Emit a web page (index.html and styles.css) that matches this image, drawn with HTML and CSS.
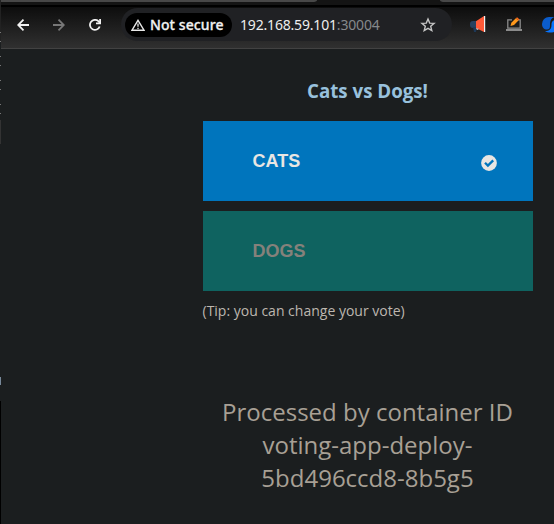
FILE: index.html
```html
<!DOCTYPE html>
<html lang="en">
<head>
<meta charset="utf-8">
<title>Cats vs Dogs!</title>
<link rel="stylesheet" href="styles.css">
</head>
<body>
<div class="desktop">
  <div class="edge"></div>
  <div class="browser">
    <div class="tabs"><div class="tab-left"></div><div class="tab-right"></div></div>
    <header class="toolbar">
      <nav class="nav">
        <svg width="12" height="12" viewBox="0 0 12 12" fill="none" stroke="#f2f2f2" stroke-width="1.8"><path d="M12 6H1.5M6.5 .7 1.2 6l5.3 5.3"/></svg>
        <svg width="12" height="12" viewBox="0 0 12 12" fill="none" stroke="#777" stroke-width="1.8"><path d="M0 6h10.5M5.5 .7 10.8 6l-5.3 5.3"/></svg>
        <svg width="12" height="12" viewBox="0 0 12 12" fill="none" stroke="#f2f2f2" stroke-width="1.8"><path d="M10.7 7.5A5 5 0 1 1 9.7 2.5L11 4"/><path d="M11.1 0v4.3H7"/></svg>
      </nav>
      <div class="address">
        <div class="chip">
          <svg width="14" height="12" viewBox="0 0 14 12"><path d="M7 1.3 13 11.2H1z" fill="none" stroke="#e8e8e8" stroke-width="1.4"/><path d="M7 4.5v3.3M7 8.7v1.2" stroke="#e8e8e8" stroke-width="1.3"/></svg>
          <span class="chip-text">Not secure</span>
        </div>
        <div class="url">192.168.59.101<span class="port">:30004</span></div>
        <svg class="star" width="16" height="16" viewBox="0 0 16 16"><path d="M8 2 9.7 6.1l4.4.3-3.4 2.9 1.1 4.3L8 11.3l-3.8 2.3 1.1-4.3-3.4-2.9 4.4-.3z" fill="none" stroke="#c6c6c6" stroke-width="1.4"/></svg>
      </div>
      <svg class="megaphone" width="16" height="17" viewBox="0 0 16 17"><path d="M3 5h4v7H3a3 3 0 0 1-3-3V8a3 3 0 0 1 3-3z" fill="#26415f"/><path d="M3 11h4l-1 5H4z" fill="#1d3857"/><path d="M6 5.2 14 0v16l-8-4z" fill="#ff5a38"/><path d="M14 0h1.2v16H14z" fill="#eef3f5"/><path d="m6 12 3 1-2 1z" fill="#ddd"/></svg>
      <svg class="laptop" width="16" height="15" viewBox="0 0 16 15"><path d="M6 2.8H1.8v8.4h12.4V2.8H12" fill="none" stroke="#8b8b8b" stroke-width="1.3"/><path d="M0 12h16v2H0z" fill="#8b8b8b"/><path d="m4.5 9 .8-3.2L9.8 1.2l2.6 2.4L8 8z" fill="#ff981c"/><path d="m9.8 1.2 1.3-1 2.4 2.2-1.1 1.2z" fill="#ff6b1a"/></svg>
      <svg class="swirl" width="16" height="16" viewBox="0 0 16 16"><path d="M13 0H7A7 7 0 0 0 0 7c0 3.500 2 5.500 5 5.500 2.500 0 3-1.500 3-4C8 4 9 1 13 0z" fill="#0b5ccb"/><path d="M16 3h-2c-4 0-4.500 2.500-4.500 5 0 4-2 6-6.500 6 4 3 13 2 13-5z" fill="#0875ff"/></svg>
    </header>
    <main class="page">
      <section class="vote">
        <h1>Cats vs Dogs!</h1>
        <button class="choice cats">CATS
          <svg width="16" height="16" viewBox="0 0 16 16"><circle cx="8" cy="8" r="7.9" fill="#e8e6e3"/><path d="m4 7.7 2.9 2.9L12.2 5.4" fill="none" stroke="#0075bd" stroke-width="2.3"/></svg>
        </button>
        <button class="choice dogs">DOGS</button>
        <p class="tip">(Tip: you can change your vote)</p>
        <p class="host">Processed by container ID voting-app-deploy-5bd496ccd8-8b5g5</p>
      </section>
    </main>
  </div>
</div>
</body>
</html>
```
FILE: styles.css
```css
* { box-sizing: border-box; }
body { margin: 0; background: #1b1e1f; font-family: "Open Sans", sans-serif; overflow: hidden; }
svg { display: block; flex: none; }
.desktop { display: flex; height: 524px; }
.edge {
  width: 1px;
  background: linear-gradient(#222 0 32px, #777 32px 33px, #222 33px 41px, #777 41px 42px, #1b1e1f 42px 56px, #777 56px 57px, #1b1e1f 57px 65px, #777 65px 66px, #1b1e1f 66px 80px, #777 80px 81px, #1b1e1f 81px 89px, #777 89px 90px, #1b1e1f 90px 104px, #777 104px 105px, #1b1e1f 105px 113px, #777 113px 114px, #1b1e1f 114px 120px, #333 120px 144px, #1b1e1f 144px 377px, #789 377px 385px, #1b1e1f 385px 401px, #000 401px);
}
.browser { flex: 1; min-width: 0; }
.tabs { height: 7px; display: flex; justify-content: space-between; background: #141414; border-bottom: 2px solid #000; padding-bottom: 3px; }
.tab-left { width: 316px; height: 2px; background: #484848; border-bottom-right-radius: 5px 2px; }
.tab-right { width: 114px; height: 2px; background: #484848; border-bottom-left-radius: 5px 2px; }
.toolbar { height: 42px; display: flex; align-items: center; background: linear-gradient(#0d0d0d, #303030); border-bottom: 1px solid #424242; overflow: hidden; padding-bottom: 6px; }
.nav { display: flex; gap: 24px; width: 120px; padding: 0 0 0 16px; flex: none; }
.address { display: flex; align-items: center; flex: none; width: 331px; height: 33px; padding: 0 16px 0 4px; border-radius: 17px; background: #202124; }
.chip { display: flex; align-items: center; gap: 5px; width: 107px; height: 24px; padding-left: 6px; border-radius: 12px; background: #000; color: #f1f1f1; }
.chip-text { font-family: "Noto Sans", sans-serif; font-size: 14px; font-weight: 500; letter-spacing: .1px; white-space: nowrap; line-height: 20px; -webkit-text-stroke: .3px #f1f1f1; }
.url { flex: 1; margin-left: 8px; color: #eee; font-family: "Noto Sans", sans-serif; font-size: 14px; line-height: 20px; letter-spacing: -.18px; white-space: nowrap; }
.port { color: #85888b; }
.megaphone { margin-left: 18px; }
.laptop { margin-left: 20px; }
.swirl { margin-left: 20px; }
.page { padding: 31px 19px 0 201.5px; }
.vote { width: 330px; }
h1 { margin: 0; height: 41px; color: #98c1dd; text-align: center; font-size: 18.72px; line-height: 22px; font-weight: 700; }
.choice { display: flex; align-items: center; justify-content: space-between; width: 330px; height: 80px; margin: 0 0 10px; border: 0; padding: 0 36px 0 50px; font: 700 18px "Liberation Sans", sans-serif; }
.cats { background: #0075bd; color: #e8e6e3; }
.choice svg { margin-top: 3px; }
.dogs { background: #0f6360; color: #85817b; }
.tip { margin: 0; font-size: 14px; line-height: 20px; color: #bdb7af; }
.host { margin: 74px 0 0; text-align: center; font-size: 24px; line-height: 33px; color: #a8a095; }
```
